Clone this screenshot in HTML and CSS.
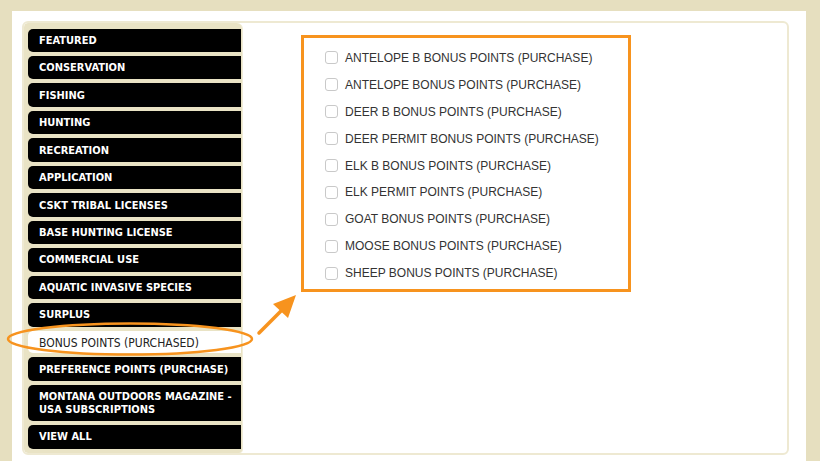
FILE: index.html
```html
<!DOCTYPE html>
<html>
<head>
<meta charset="utf-8">
<link rel="stylesheet" href="styles.css">
</head>
<body>
<div class="page">
  <div class="panel">
    <nav class="sidebar">
      <a class="nav-item">FEATURED</a>
      <a class="nav-item">CONSERVATION</a>
      <a class="nav-item">FISHING</a>
      <a class="nav-item">HUNTING</a>
      <a class="nav-item">RECREATION</a>
      <a class="nav-item">APPLICATION</a>
      <a class="nav-item">CSKT TRIBAL LICENSES</a>
      <a class="nav-item">BASE HUNTING LICENSE</a>
      <a class="nav-item">COMMERCIAL USE</a>
      <a class="nav-item">AQUATIC INVASIVE SPECIES</a>
      <a class="nav-item">SURPLUS</a>
      <a class="nav-item active">BONUS POINTS (PURCHASED)</a>
      <a class="nav-item">PREFERENCE POINTS (PURCHASE)</a>
      <a class="nav-item">MONTANA OUTDOORS MAGAZINE - USA SUBSCRIPTIONS</a>
      <a class="nav-item">VIEW ALL</a>
    </nav>
    <main class="content">
      <div class="filter-box">
        <label class="option"><span class="check"></span>ANTELOPE B BONUS POINTS (PURCHASE)</label>
        <label class="option"><span class="check"></span>ANTELOPE BONUS POINTS (PURCHASE)</label>
        <label class="option"><span class="check"></span>DEER B BONUS POINTS (PURCHASE)</label>
        <label class="option"><span class="check"></span>DEER PERMIT BONUS POINTS (PURCHASE)</label>
        <label class="option"><span class="check"></span>ELK B BONUS POINTS (PURCHASE)</label>
        <label class="option"><span class="check"></span>ELK PERMIT POINTS (PURCHASE)</label>
        <label class="option"><span class="check"></span>GOAT BONUS POINTS (PURCHASE)</label>
        <label class="option"><span class="check"></span>MOOSE BONUS POINTS (PURCHASE)</label>
        <label class="option"><span class="check"></span>SHEEP BONUS POINTS (PURCHASE)</label>
      </div>
    </main>
  </div>
</div>
<svg class="annotations" width="820" height="461" viewBox="0 0 820 461">
  <ellipse cx="130" cy="339" rx="122" ry="15.5" fill="none" stroke="#f7931e" stroke-width="2.5"/>
  <line x1="259" y1="333" x2="284" y2="308" stroke="#f7931e" stroke-width="3.5" stroke-linecap="round"/>
  <polygon points="273,304 296,295 288,318" fill="#f7931e"/>
</svg>
</body>
</html>
```

FILE: styles.css
```css
html, body {
  margin: 0;
  padding: 0;
}

body {
  background: #e6dfbf;
  width: 820px;
  height: 461px;
  overflow: hidden;
  position: relative;
  font-family: "DejaVu Sans", Verdana, sans-serif;
}

.page {
  margin: 11px 14px 0 12px;
  background: #ffffff;
  height: 450px;
  padding: 10px 17px 6px 10px;
  box-sizing: border-box;
}

.panel {
  display: flex;
  align-items: stretch;
  height: 434px;
  border: 2px solid #eee9d2;
  border-radius: 6px;
  box-sizing: border-box;
  overflow: hidden;
}

.sidebar {
  width: 219px;
  flex: none;
  background: #e9e3c5;
  border-right: 1px solid #f1edd9;
  border-radius: 4px 6px 4px 4px;
  padding: 5.5px 1px 6px 4px;
  box-sizing: border-box;
  display: flex;
  flex-direction: column;
  gap: 4.1px;
}

.nav-item {
  display: block;
  background: #000000;
  color: #ffffff;
  font-family: "DejaVu Sans Condensed", "DejaVu Sans", Verdana, sans-serif;
  font-stretch: condensed;
  font-weight: bold;
  font-size: 11px;
  line-height: 13px;
  padding: 5.2px 2px 5.2px 11px;
  border-radius: 5px 0 0 5px;
}

.nav-item.active {
  background: #ffffff;
  color: #222222;
  font-weight: normal;
  font-size: 12px;
  padding-top: 6.8px;
  padding-bottom: 2.8px;
}

.content {
  flex: 1;
  padding: 12px 0 0 58px;
}

.filter-box {
  width: 330px;
  height: 257px;
  box-sizing: border-box;
  border: 3px solid #f7931e;
  padding: 6.5px 0 0 21px;
  display: flex;
  flex-direction: column;
}

.option {
  display: flex;
  align-items: center;
  height: 26.9px;
  font-family: "Liberation Sans", Arial, sans-serif;
  font-size: 12px;
  color: #333333;
  white-space: nowrap;
}

.check {
  width: 11px;
  height: 11px;
  border: 1px solid #c9c9c9;
  border-radius: 3px;
  background: #ffffff;
  margin-right: 7px;
  flex: none;
}

.annotations {
  position: absolute;
  left: 0;
  top: 0;
  pointer-events: none;
}
```
